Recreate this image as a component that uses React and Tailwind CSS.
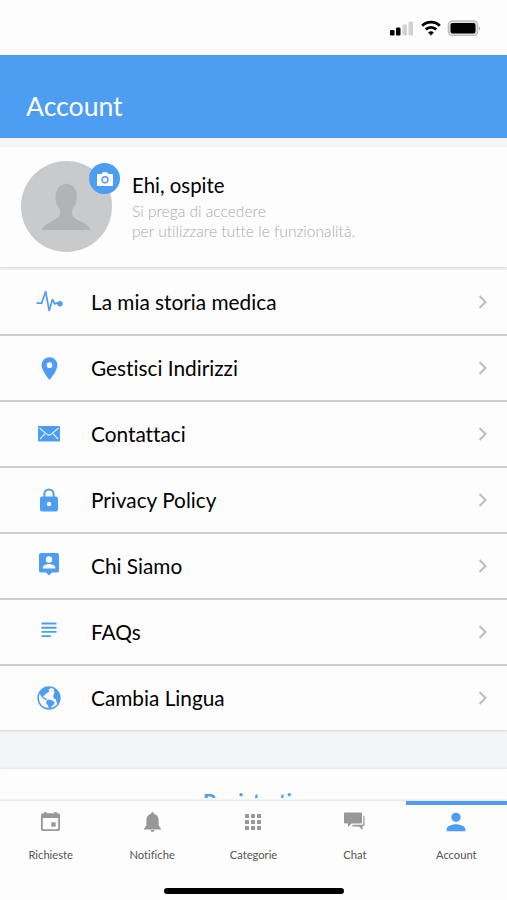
import { MdLocationOn, MdPerson } from 'react-icons/md';

function PulseIcon() {
  return (
    <svg className="w-[27px] h-6" viewBox="0 0 27 24" fill="none">
      <path d="M.5 13.200h5.200L9.600 1.500l3.600 19 3.300-11 2.400 4.500 1.500-.8h3" stroke="#4d9df3" strokeWidth="1.700" strokeLinejoin="round" />
      <circle cx="24" cy="13.700" r="2.700" fill="#4d9df3" />
    </svg>
  );
}

function MailIcon() {
  return (
    <svg className="w-[22px] h-4" viewBox="0 0 22 16" fill="none">
      <rect width="22" height="15.500" rx="1" fill="#4d9df3" />
      <path d="M1.500 2 9 8.300q2 1.600 4 0L20.500 2M2 13l5-5.300M20 13l-5-5.300" stroke="#e3f0fd" strokeWidth="1.100" />
    </svg>
  );
}

function LockIcon() {
  return (
    <svg className="w-[18px] h-6" viewBox="0 0 18 24" fill="none">
      <path d="M4.400 9.500V6a4.600 4.600 0 0 1 9.200 0v3.500" stroke="#4d9df3" strokeWidth="2" />
      <rect y="8.500" width="18" height="15.100" rx="2" fill="#4d9df3" />
      <circle cx="9" cy="16" r="2.200" fill="#fff" />
    </svg>
  );
}

function PersonPinIcon() {
  return (
    <svg className="w-5 h-[23px]" viewBox="0 0 20 23">
      <path d="M2 0h16q2 0 2 2v15.500q0 2-2 2h-5L10 22.500l-3-3H2q-2 0-2-2V2q0-2 2-2z" fill="#4d9df3" />
      <circle cx="10" cy="6.500" r="3.200" fill="#fff" />
      <path d="M3.800 15.500v-1c0-2.200 4-3.400 6.200-3.400s6.200 1.200 6.200 3.400v1z" fill="#fff" />
    </svg>
  );
}

function LinesIcon() {
  return (
    <svg className="w-4 h-4" viewBox="0 0 16 16" stroke="#4d9df3" strokeWidth="1.900">
      <path d="M.5 1.500h15M.5 5.700h15M.5 9.900h15M.5 14.100h9.500" />
    </svg>
  );
}

function GlobeIcon() {
  return (
    <svg className="w-6 h-6" viewBox="0 0 24 24" fill="#4d9df3">
      <circle cx="12" cy="12" r="10.900" fill="none" stroke="#4d9df3" strokeWidth="1.500" />
      <path d="M4.500 4.500 8 2l5-.8.5 1.600-2.300.8 1.300 1.200-1.300 1.700-2.200 1-1.300 2-1.600.2.300 1.600 2 .8 1.600 1.500-1 .5-3-1.700-2.500-2.900-.7-3z" />
      <path d="m9.500 14.300 2.700-.8 2.800 1 2.700 1.500-.7 2.500-1.900 1.300-2 2.600-1.300.6-.7-3.200-1.900-2.600z" />
      <path d="m17.500 2.600 3.500 3.400 1.900 5-.2 4-2 3.200-1.500-2.700-.2-2.200-1.800-.5-1.200-2.500 1-2.800.8-1.200-1.300-1.200z" />
    </svg>
  );
}

function CalendarIcon() {
  return (
    <svg className="w-[19px] h-[19px]" viewBox="0 0 19 19" fill="currentColor">
      <path fillRule="evenodd" d="M3.200 0h2.300v1.300h8V0h2.300v1.300H17q2 0 2 2V17q0 2-2 2H2q-2 0-2-2V3.300q0-2 2-2h1.200zM1.800 6v10.200q0 1 1 1h13.400q1 0 1-1V6z" />
      <rect x="10.300" y="10.300" width="4.400" height="4.400" rx=".5" />
    </svg>
  );
}

function BellIcon() {
  return (
    <svg className="w-[17px] h-5" viewBox="0 0 17 20" fill="currentColor">
      <path d="M8.500 0q1.300 0 1.400 1.700c3 .7 4.700 3 4.700 6v5.500l2.400 3.500v.8H0v-.8l2.400-3.500V7.700c0-3 1.700-5.300 4.700-6Q7.200 0 8.500 0z" />
      <path d="M6.500 18h4q-.3 2-2 2t-2-2z" />
    </svg>
  );
}

function AppsIcon() {
  return (
    <svg className="w-4 h-4" viewBox="0 0 16 16" fill="currentColor">
      {[0, 6, 12].map((y) =>
        [0, 6, 12].map((x) => <rect key={`${x}-${y}`} x={x} y={y} width="4" height="4" rx=".5" />)
      )}
    </svg>
  );
}

function ChatIcon() {
  return (
    <svg className="w-[21px] h-[19px]" viewBox="0 0 21 19" fill="currentColor">
      <path d="M1 .5h16q1 0 1 1v9q0 1-1 1H7.500L4 15v-3.500H1q-1 0-1-1v-9q0-1 1-1z" />
      <path d="M19.300 3.500q1.200.2 1.200 1.200v8q0 1.300-1.300 1.300h-.7v4L15 14.500H7.500l1.700-1.800h9q1.100 0 1.100-1.100z" />
    </svg>
  );
}

const menuItems = [
  { label: 'La mia storia medica', icon: <PulseIcon /> },
  { label: 'Gestisci Indirizzi', icon: <MdLocationOn className="w-[27px] h-[27px]" /> },
  { label: 'Contattaci', icon: <MailIcon /> },
  { label: 'Privacy Policy', icon: <LockIcon /> },
  { label: 'Chi Siamo', icon: <div className="pb-1"><PersonPinIcon /></div> },
  { label: 'FAQs', icon: <div className="pb-1"><LinesIcon /></div> },
  { label: 'Cambia Lingua', icon: <GlobeIcon /> },
];

const tabs = [
  { label: 'Richieste', icon: <CalendarIcon /> },
  { label: 'Notifiche', icon: <BellIcon /> },
  { label: 'Categorie', icon: <AppsIcon /> },
  { label: 'Chat', icon: <ChatIcon /> },
  { label: 'Account', icon: <MdPerson className="w-7 h-7" />, active: true },
];

function StatusBar() {
  return (
    <div className="h-[55px] shrink-0 bg-[#fdfdfd] flex justify-end pt-[20px] pr-[26px]">
      <svg className="w-[91px] h-4" viewBox="0 0 91 16">
        <rect x="0" y="10" width="4.500" height="5.500" rx="1.200" />
        <rect x="6" y="7.500" width="4.500" height="8" rx="1.200" />
        <rect x="12.500" y="4.500" width="4.500" height="11" rx="1.200" fill="#d2d2d2" />
        <rect x="18.500" y="1.500" width="4.500" height="14" rx="1.200" fill="#d2d2d2" />
        <g fill="none" stroke="#000" strokeWidth="2.800">
          <path d="M32.200 5.800a12.500 12.500 0 0 1 17.600 0" />
          <path d="M35.700 9.600a7.500 7.500 0 0 1 10.600 0" />
        </g>
        <path d="m41 15.500-2.900-2.900a4.100 4.100 0 0 1 5.800 0z" />
        <rect x="58.500" y="1" width="29" height="14.500" rx="4" fill="#e4e4e4" stroke="#bdbdbd" strokeWidth="1.500" />
        <rect x="60.500" y="3" width="25" height="10.500" rx="2" />
        <path d="M89 6.500q2 2 0 4z" fill="#999" />
      </svg>
    </div>
  );
}

function Profile() {
  return (
    <div className="h-[120px] shrink-0 bg-[#fdfdfd] flex pl-[21px] pt-[14px] shadow-[0_1px_2px_#d6d7d8]">
      <div className="relative w-[91px] h-[91px]">
        <svg className="w-full h-full" viewBox="0 0 91 91">
          <circle cx="45.500" cy="45.500" r="45.500" fill="#c8cacc" />
          <path d="M21 69c1-6 10-8 14-11 5-3 5-7 3-11-3-3-3-7-3.500-10 0-3 .5-5 1-7 2-5 5-6 10-7.500 5 1 8 3 9.500 7.500.8 3 1.200 5 .7 8-.5 4-1.500 7-3.700 9-1.500 5-1.500 8 3 11 5 3 13 5 14.500 11z" fill="#b1b3b5" />
        </svg>
        <div className="absolute left-[68px] top-[2px] w-[31px] h-[31px] rounded-full bg-[#4d9df3] flex items-center justify-center">
          <svg className="w-4 h-[14px]" viewBox="0 0 16 14">
            <path d="M1 2h3.500L6 .3h4L11.500 2H15q1 0 1 1v10q0 1-1 1H1q-1 0-1-1V3q0-1 1-1z" fill="#fff" />
            <circle cx="8" cy="7.700" r="3" fill="none" stroke="#4d9df3" strokeWidth="1.400" />
          </svg>
        </div>
      </div>
      <div className="ml-5 pt-[11px]">
        <h2 className="text-[20.400px] leading-[26px] text-black">Ehi, ospite</h2>
        <p className="mt-[3px] text-[15.600px] leading-[20px] font-light text-[#aaa] whitespace-nowrap">
          Si prega di accedere
          <br />
          per utilizzare tutte le funzionalità.
        </p>
      </div>
    </div>
  );
}

export default function App() {
  return (
    <div className="w-[507px] h-[900px] flex flex-col overflow-hidden bg-[#f3f5f7] font-['Lato',sans-serif] [font-variant-ligatures:none]">
      <StatusBar />

      <header className="h-[83px] shrink-0 bg-[#4d9df3] pl-[26px] pt-[33px] mb-[9px]">
        <h1 className="text-[26.600px] leading-[36px] text-white">Account</h1>
      </header>

      <Profile />

      {/* Menu */}
      <div className="shrink-0 mt-[3px] bg-[#fdfdfd] shadow-[0_1px_2px_#d6d7d8]">
        {menuItems.map((item) => (
          <div key={item.label} className="h-[66px] flex items-center border-b-2 border-[#cecece] last:border-0 last:h-[64px]">
            <div className="ml-[35px] w-7 flex justify-center text-[#4d9df3]">{item.icon}</div>
            <span className="ml-7 text-[20.800px] text-black">{item.label}</span>
            <svg className="ml-auto mr-5 w-[9px] h-[14px]" viewBox="0 0 9 14" fill="none" stroke="#bcbcbc" strokeWidth="2">
              <path d="m1.500 1 6 6-6 6" />
            </svg>
          </div>
        ))}
      </div>

      {/* Register button, cut off by the tab bar */}
      <div className="mt-[39px] flex-1 min-h-0 overflow-hidden bg-[#fdfdfd] shadow-[0_-1px_2px_#e2e4e6]">
        <div className="h-[29px] overflow-hidden pt-[19px] text-center text-[21px] leading-[26px] font-bold text-[#4d9df3] pr-3">
          Registrati
        </div>
      </div>

      {/* Tab bar */}
      <nav className="h-[99px] shrink-0 bg-[#fdfdfd] shadow-[0_-1px_2px_#dfe3e5]">
        <div className="grid grid-cols-5">
          {tabs.map((tab) => (
            <div
              key={tab.label}
              className={
                tab.active
                  ? 'h-[85px] flex flex-col items-center border-t-4 border-[#4d9df3] text-[#4d9df3]'
                  : 'h-[85px] flex flex-col items-center border-t-4 border-transparent text-[#989898]'
              }
            >
              <div className="h-[33px] flex items-center justify-center">{tab.icon}</div>
              <span className="mt-[9px] text-[11.200px] leading-4 text-[#555]">{tab.label}</span>
            </div>
          ))}
        </div>
        <div className="ml-[164px] mt-[2px] w-[180px] h-[6px] rounded-full bg-black" />
      </nav>
    </div>
  );
}
